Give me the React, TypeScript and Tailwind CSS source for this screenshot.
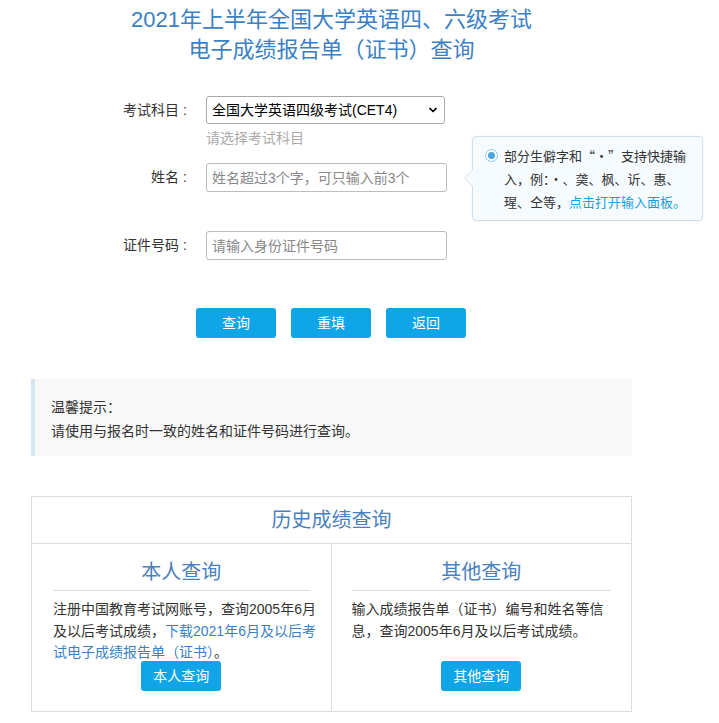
import { ChevronDown } from "lucide-react";

const font = "font-['Liberation_Sans','Noto_Sans_CJK_SC',sans-serif]";

function Field({ label, children }: { label: string; children: React.ReactNode }) {
  return (
    <div className="flex items-center">
      <label className="w-[160px] text-right text-[14px] text-[#333]">
        {label}
        <span className="inline-block w-[12px] text-center">:</span>
      </label>
      <div className="ml-[15px]">{children}</div>
    </div>
  );
}

function Btn({ label }: { label: string }) {
  return (
    <button className="h-[30px] w-[80px] rounded-[3px] bg-[#10a5e6] text-[14px] text-white">
      {label}
    </button>
  );
}

export default function App() {
  return (
    <div className={`min-h-screen bg-white ${font} text-[#333]`}>
      <div className="ml-[31px] w-[601px] pt-[5px] pb-[10px]">
        {/* Title */}
        <h1 className="text-center text-[22px] leading-[30px] font-normal text-[#3b7fc4]">
          2021年上半年全国大学英语四、六级考试
          <br />
          电子成绩报告单（证书）查询
        </h1>

        {/* Form */}
        <div className="relative mt-[31px]">
          <Field label="考试科目">
            <div className="relative h-[28px] w-[239px]">
              <select className="h-full w-full appearance-none rounded-[3px] border border-[#a9a9a9] bg-white pl-[5px] text-[14px] text-black outline-none">
                <option>全国大学英语四级考试(CET4)</option>
                <option>全国大学英语六级考试(CET6)</option>
              </select>
              <ChevronDown
                className="pointer-events-none absolute right-[6px] top-[8px] h-[12px] w-[12px] text-black"
                strokeWidth={3.5}
              />
            </div>
          </Field>
          <div className="ml-[175px] mt-[4px] text-[14px] leading-[20px] text-[#aaa]">请选择考试科目</div>

          <div className="mt-[15px]">
            <Field label="姓名">
              <input
                className="h-[29px] w-[241px] rounded-[3px] border border-[#bdbdbd] px-[5px] text-[14px] outline-none placeholder:text-[#888]"
                placeholder="姓名超过3个字，可只输入前3个"
              />
            </Field>
          </div>

          <div className="mt-[39px]">
            <Field label="证件号码">
              <input
                className="h-[29px] w-[241px] rounded-[3px] border border-[#bdbdbd] px-[5px] text-[14px] outline-none placeholder:text-[#888]"
                placeholder="请输入身份证件号码"
              />
            </Field>
          </div>

          {/* Tooltip popover */}
          <div className="absolute left-[441px] top-[40px] w-[231px] rounded-[4px] border border-[#cfdfec] bg-[#f6fbff] py-[7px] pl-[12px] pr-[8px] font-['Noto_Sans_CJK_SC',sans-serif] text-[13px] leading-[23px] text-[#333] shadow-[0_0_3px_rgba(0,0,0,0.05)]">
            <span className="absolute left-[-9px] top-[32px] h-0 w-0 border-y-[9px] border-r-[9px] border-y-transparent border-r-[#cfdfec]" />
            <span className="absolute left-[-8px] top-[33px] h-0 w-0 border-y-[8px] border-r-[8px] border-y-transparent border-r-[#f6fbff]" />
            <div className="flex">
              <span className="mr-[6px] mt-[5px] flex h-[13px] w-[13px] shrink-0 items-center justify-center rounded-full border border-[#8cc6ea] bg-white">
                <span className="h-[7px] w-[7px] rounded-full bg-[#4aa6dc]" />
              </span>
              <p>
                部分生僻字和“·”支持快捷输入，例：·、䶮、枫、䜣、惠、瑆、仝等，
                <span className="text-[#1a9ee0]">点击打开输入面板。</span>
              </p>
            </div>
          </div>
        </div>

        {/* Buttons */}
        <div className="mt-[48px] flex gap-[15px] pl-[165px]">
          <Btn label="查询" />
          <Btn label="重填" />
          <Btn label="返回" />
        </div>

        {/* Tip */}
        <div className="mt-[41px] h-[77px] border-l-[4px] border-[#d6e4f3] bg-[#f8f8f8] pl-[16px] pt-[16px] text-[14px] leading-[24px]">
          <p>温馨提示：</p>
          <p>请使用与报名时一致的姓名和证件号码进行查询。</p>
        </div>

        {/* History */}
        <div className="mt-[40px] border border-[#dcdcdc]">
          <div className="h-[47px] border-b border-[#dcdcdc] text-center text-[20px] leading-[47px] text-[#4a80bd]">
            历史成绩查询
          </div>
          <div className="grid grid-cols-2">
            <div className="border-r border-[#dcdcdc] px-[21px] pb-[20px]">
              <div className="border-b border-[#dcdcdc] pt-[15px] pb-[5px] text-center text-[20px] leading-[26px] text-[#4a80bd]">
                本人查询
              </div>
              <p className="mr-[-10px] mt-[8px] h-[62px] text-[14px] leading-[21.5px]">
                注册中国教育考试网账号，查询2005年6月及以后考试成绩，
                <span className="text-[#3b7fc4]">下载2021年6月及以后考试电子成绩报告单（证书）</span>。
              </p>
              <div className="text-center">
                <Btn label="本人查询" />
              </div>
            </div>
            <div className="px-[20px] pb-[20px]">
              <div className="border-b border-[#dcdcdc] pt-[15px] pb-[5px] text-center text-[20px] leading-[26px] text-[#4a80bd]">
                其他查询
              </div>
              <p className="mt-[8px] h-[62px] text-[14px] leading-[21.5px]">
                输入成绩报告单（证书）编号和姓名等信息，查询2005年6月及以后考试成绩。
              </p>
              <div className="text-center">
                <Btn label="其他查询" />
              </div>
            </div>
          </div>
        </div>
      </div>
    </div>
  );
}
